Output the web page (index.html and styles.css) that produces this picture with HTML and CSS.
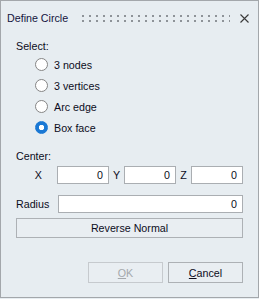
FILE: index.html
```html
<!DOCTYPE html>
<html lang="en">
  <head>
    <meta charset="UTF-8" />
    <title>Define Circle</title>
    <link rel="stylesheet" href="styles.css">
  </head>
  <body>
    <div class="dialog">
      <header class="titlebar">
        <span class="title">Define Circle</span>
        <svg class="grip" width="148" height="7">
          <pattern id="dot" width="7" height="5" patternUnits="userSpaceOnUse">
            <rect width="2" height="2" fill="#8e9398" />
          </pattern>
          <rect width="148" height="7" fill="url(#dot)" />
        </svg>
        <svg class="close" width="9" height="9" viewBox="0 0 9 9">
          <path d="M0.5 0.5 L8.5 8.5 M8.5 0.5 L0.5 8.5" stroke="#3a3a3a" stroke-width="1.1" fill="none" />
        </svg>
      </header>

      <section class="content">
        <p class="label">Select:</p>
        <ul class="radios">
          <li><span class="radio"></span>3 nodes</li>
          <li><span class="radio"></span>3 vertices</li>
          <li><span class="radio"></span>Arc edge</li>
          <li><span class="radio on"></span>Box face</li>
        </ul>

        <p class="label center">Center:</p>
        <div class="xyz">
          <span class="axis x">X</span>
          <span class="field">0</span>
          <span class="axis">Y</span>
          <span class="field">0</span>
          <span class="axis">Z</span>
          <span class="field">0</span>
        </div>

        <div class="radius">
          <span class="label">Radius</span>
          <span class="field">0</span>
        </div>

        <button class="btn wide">Reverse Normal</button>

        <div class="actions">
          <button class="btn" disabled><u>O</u>K</button>
          <button class="btn"><u>C</u>ancel</button>
        </div>
      </section>
    </div>
  </body>
</html>
```

FILE: styles.css
```css
* {
  box-sizing: border-box;
  margin: 0;
  padding: 0;
}

body {
  font-family: "Liberation Sans", Arial, sans-serif;
  font-size: 10.7px;
  color: #0c0c1c;
  background: #e7edf1;
}

.dialog {
  width: 259px;
  height: 298px;
  border: 1px solid #a3a7ab;
  background: #e7edf1;
}

.titlebar {
  display: flex;
  align-items: center;
  height: 34px;
  padding-left: 6px;
}

.title {
  color: #141440;
}

.grip {
  display: block;
  margin-left: auto;
  margin-top: 1px;
}

.close {
  display: block;
  margin-left: 10px;
  margin-right: 9px;
  margin-top: 1px;
}

.content {
  padding: 0 15px;
}

.label {
  line-height: 14px;
  margin-top: 4px;
}

.radios {
  list-style: none;
  margin-top: 1px;
  padding-left: 19px;
}

.radios li {
  display: flex;
  align-items: center;
  height: 21px;
}

.radio {
  width: 13px;
  height: 13px;
  border-radius: 50%;
  border: 1px solid #858585;
  background: #fff;
  margin-right: 6px;
}

.radio.on {
  border-color: #1a78d4;
  background: radial-gradient(circle, #fff 2.4px, #1a78d4 3px);
}

.center {
  margin-top: 11px;
}

.xyz {
  display: grid;
  grid-template-columns: 41px 52px 15px 52px 15px 52px;
  margin-top: 3px;
}

.axis {
  text-align: center;
  line-height: 18px;
}

.axis.x {
  text-align: right;
  padding-right: 15px;
}

.field {
  height: 18px;
  line-height: 16px;
  border: 1px solid #aaaeb2;
  background: #fff;
  text-align: right;
  padding-right: 5px;
}

.radius {
  display: grid;
  grid-template-columns: 42px 1fr;
  align-items: center;
  margin-top: 11px;
}

.radius .label {
  margin-top: 0;
}

.btn {
  font: inherit;
  color: inherit;
  height: 20px;
  border: 1px solid #adb1b5;
  background: #e9eef2;
}

.wide {
  display: block;
  width: 100%;
  margin-top: 5px;
}

.actions {
  display: flex;
  justify-content: flex-end;
  gap: 5px;
  margin-top: 24px;
}

.actions .btn {
  width: 75px;
  height: 21px;
}

.btn:disabled {
  color: #a4a8ac;
  border-color: #c6cace;
}
```
